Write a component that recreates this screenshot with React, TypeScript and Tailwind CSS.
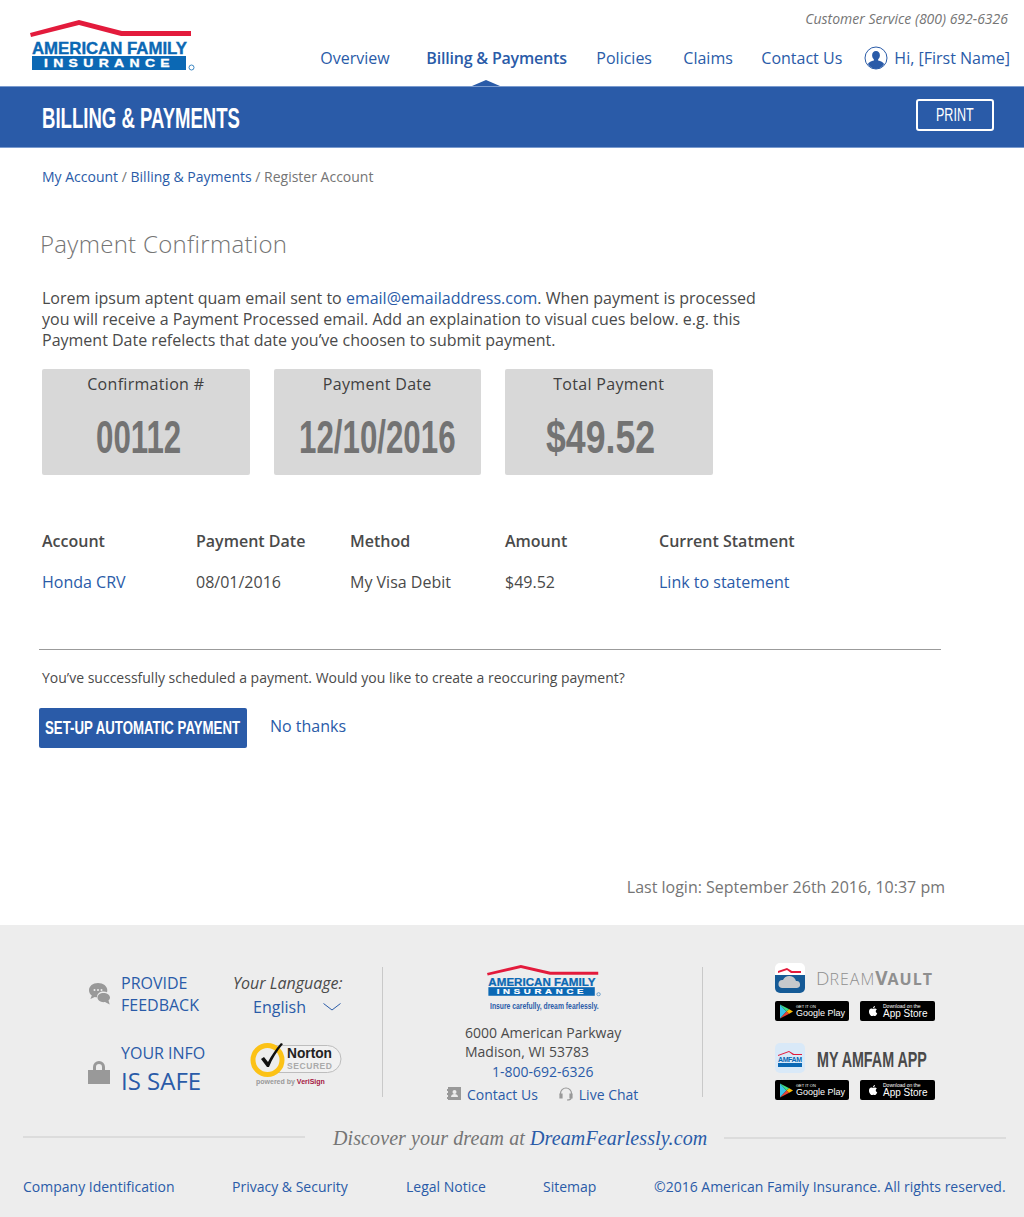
import React from 'react';

const condensed = "font-['Liberation_Sans',sans-serif] inline-block whitespace-nowrap origin-left";

const Logo: React.FC<{ className?: string }> = ({ className }) => (
  <svg viewBox="0 0 165 52" preserveAspectRatio="none" className={className}>
    <path d="M0 13 L49 0 L92 11 H161 V16 H91 L49 5 L1 17 Z" fill="#e31b3c" />
    <text x="2" y="34" fontFamily="'Liberation Sans', sans-serif" fontWeight="700" fontSize="17" fill="#0b68b4" stroke="#0b68b4" strokeWidth="0.4" textLength="155" lengthAdjust="spacingAndGlyphs">AMERICAN FAMILY</text>
    <rect x="2" y="36" width="154" height="14" fill="#0b68b4" />
    <text x="14" y="46.7" fontFamily="'Liberation Sans', sans-serif" fontWeight="700" fontSize="10.5" letterSpacing="4" fill="#fff" stroke="#fff" strokeWidth="0.3" textLength="131" lengthAdjust="spacingAndGlyphs">INSURANCE</text>
    <circle cx="161.500" cy="47.500" r="2.500" fill="none" stroke="#0b68b4" strokeWidth="0.8" />
  </svg>
);

const UserIcon = () => (
  <svg viewBox="0 0 24 24" className="w-[24px] h-[24px]">
    <circle cx="12" cy="12" r="11" fill="#fff" stroke="#2a5ba8" strokeWidth="1" />
    <path d="M12 5c2.400 0 3.900 1.900 3.900 4.300 0 1.700-.8 3.300-1.800 4.100v1.200c2.600.7 5 1.700 6 3.300A11 11 0 0 1 12 23a11 11 0 0 1-8.100-5.100c1-1.600 3.400-2.600 6-3.300v-1.200C8.900 12.600 8.100 11 8.100 9.300 8.100 6.900 9.600 5 12 5z" fill="#2a5ba8" />
  </svg>
);

const ChatIcon = () => (
  <svg viewBox="0 0 24 24" className="w-[24px] h-[24px]" fill="#999">
    <path d="M10 1C4.800 1 1 4.200 1 8.300c0 2.200 1 4 2.800 5.300L2.400 17l4.400-2c.7.2 1.500.3 2.200.3C9 11.500 12 9.500 15.500 9.500c1.300 0 2.500.2 3.500.7C19.200 9.600 19.300 9 19.300 8.300 19.300 4.200 15.200 1 10 1z" />
    <path d="M15.500 11c-3.500 0-6 2-6 4.600s2.500 4.600 6 4.600c.5 0 1 0 1.500-.1l4.700 2.400-1.200-3.900c1-.8 1.500-1.900 1.500-3C22 13 19 11 15.500 11z" />
    <circle cx="6.500" cy="8" r="1" fill="#ededed" />
    <circle cx="10" cy="8" r="1" fill="#ededed" />
    <circle cx="13.500" cy="8" r="1" fill="#ededed" />
  </svg>
);

const LockIcon = () => (
  <svg viewBox="0 0 22 24" className="w-[22px] h-[24px]" fill="#999">
    <path d="M0 10h22v14H0z" />
    <path d="M5 11V7a6 6 0 0 1 12 0v4h-3V7a3 3 0 0 0-6 0v4z" />
  </svg>
);

const NortonSeal = () => (
  <svg viewBox="0 0 92 48" className="w-[92px] h-[48px]">
    <rect x="14" y="6.500" width="77" height="27" rx="13.500" fill="#f1f1f1" stroke="#bdbdbd" strokeWidth="1" />
    <circle cx="17.500" cy="21" r="14.500" fill="#ededed" stroke="#fcc216" strokeWidth="5" />
    <path d="M11 20l3-2 4 5c3-6 7-12 13-19l2 1c-6 7-11 15-14 23h-2z" fill="#111" />
    <text x="37" y="19" fontFamily="'Liberation Sans', sans-serif" fontWeight="700" fontSize="14" fill="#222" textLength="45" lengthAdjust="spacingAndGlyphs">Norton</text>
    <text x="37" y="29.500" fontFamily="'Liberation Sans', sans-serif" fontWeight="700" fontSize="8.500" fill="#aaa" textLength="45">SECURED</text>
    <text x="6" y="45" fontFamily="'Liberation Sans', sans-serif" fontWeight="700" fontSize="7" fill="#999">powered by <tspan fill="#a5173f">VeriSign</tspan></text>
  </svg>
);

const GoogleBadge = () => (
  <div className="w-[74px] h-[20px] bg-black rounded-[2px] flex items-center pl-[5px] gap-[3px]">
    <svg viewBox="0 0 14 15" className="w-[13px] h-[15px] shrink-0">
      <path d="M0 0l7 7.500L0 15z" fill="#3bc4e8" />
      <path d="M0 0l10 5-3 2.500z" fill="#3ddc84" />
      <path d="M0 15l10-5-3-2.500z" fill="#ea4335" />
      <path d="M10 5l4 2.500-4 2.500-3-2.500z" fill="#fbbc04" />
    </svg>
    <div className="flex flex-col text-white leading-none font-['Liberation_Sans',sans-serif]">
      <span className="text-[4px] leading-[5px]">GET IT ON</span>
      <span className="text-[9px] leading-[9px] whitespace-nowrap">Google Play</span>
    </div>
  </div>
);

const AppleBadge = () => (
  <div className="w-[75px] h-[20px] bg-black rounded-[2px] flex items-center pl-[7px] gap-[4px]">
    <svg viewBox="0 0 24 24" className="w-[12px] h-[14px] shrink-0" fill="#fff">
      <path d="M17.500 12.600c0-2.500 2-3.700 2.100-3.800-1.200-1.700-3-1.900-3.600-2-1.500-.2-3 .9-3.800.9s-2-.9-3.300-.9C7.200 6.900 5.600 7.900 4.800 9.400c-1.800 3.100-.5 7.700 1.300 10.200.9 1.200 1.900 2.600 3.200 2.500 1.300-.1 1.800-.8 3.300-.8s2 .8 3.300.8c1.400 0 2.300-1.200 3.100-2.500 1-1.400 1.400-2.800 1.400-2.900-.1 0-2.900-1.100-2.900-4.100zM15 5.100c.7-.9 1.200-2 1-3.200-1 0-2.200.7-2.900 1.500-.6.7-1.200 1.900-1 3 1.100.1 2.200-.5 2.900-1.300z" />
    </svg>
    <div className="flex flex-col text-white leading-none font-['Liberation_Sans',sans-serif]">
      <span className="text-[5px] leading-[6px] whitespace-nowrap">Download on the</span>
      <span className="text-[10px] leading-[10px] whitespace-nowrap">App Store</span>
    </div>
  </div>
);

const StatCard: React.FC<{ label: string; value: string; padClass: string; scaleClass: string }> = ({ label, value, padClass, scaleClass }) => (
  <div className="w-[207.5px] h-[106px] bg-[#d8d8d8] rounded-[2px] pt-[4px]">
    <p className="text-center text-[16px] leading-[22px] font-medium tracking-[0.3px] text-[#404040]">{label}</p>
    <p className={`mt-[17px] h-[50px] ${padClass}`}>
      <span className={`${condensed} text-[46px] leading-[50px] font-bold text-[#737373] ${scaleClass}`}>{value}</span>
    </p>
  </div>
);

const cols = ['w-[154px]', 'w-[154px]', 'w-[155px]', 'w-[154px]', 'w-[200px]'];

export default function App() {
  return (
    <div className="w-[1024px] min-h-[1217px] bg-white font-['Open_Sans',sans-serif] text-[#4a4a4a]">
      <header className="h-[86px] relative pl-[30px] pr-[14px] flex justify-between">
        <Logo className="w-[165px] h-[52px] mt-[20px]" />
        <div className="flex flex-col items-end">
          <p className="mt-[9px] mr-[2px] text-[14px] leading-[20px] italic text-[#757575]">Customer Service (800) 692-6326</p>
          <nav className="mt-[17px] flex items-center text-[16px] leading-[24px] text-[#2a5ba8] h-[24px]">
            <a className="w-[106px]">Overview</a>
            <a className="w-[170px] font-semibold tracking-[-0.2px]">Billing &amp; Payments</a>
            <a className="w-[87px]">Policies</a>
            <a className="w-[78px]">Claims</a>
            <a className="w-[103px]">Contact Us</a>
            <UserIcon />
            <a className="ml-[6px] whitespace-nowrap">Hi, [First Name]</a>
          </nav>
        </div>
        <span className="absolute left-[472px] bottom-0 w-0 h-0 border-x-[14px] border-x-transparent border-b-[6px] border-b-[#2a5ba8]" />
      </header>

      <div className="h-[62px] bg-[#2a5ba8] border-y border-[#7a9bcf] pl-[42px] pr-[30px] flex items-center justify-between">
        <h1 className={`${condensed} mt-[3px] text-[29px] font-bold text-white scale-x-[0.64]`}>BILLING &amp; PAYMENTS</h1>
        <button className="w-[78px] h-[32px] mb-[4px] border-2 border-white rounded-[3px] text-left pl-[18px]">
          <span className={`${condensed} text-white text-[19px] leading-none scale-x-[0.66]`}>PRINT</span>
        </button>
      </div>

      <main className="h-[777px] pl-[42px] relative flex flex-col">
        <p className="mt-[19px] text-[14px] leading-[20px] text-[#757575]">
          <a className="text-[#2a5ba8]">My Account</a> / <a className="text-[#2a5ba8]">Billing &amp; Payments</a> / Register Account
        </p>
        <h2 className="mt-[41px] -ml-[2px] text-[24px] leading-[32px] font-light text-[#757575] tracking-[0.3px]">Payment Confirmation</h2>
        <p className="mt-[28px] w-[730px] text-[16px] leading-[21px] text-[#4a4a4a]">
          Lorem ipsum aptent quam email sent to <a className="text-[#2a5ba8]">email@emailaddress.com</a>. When payment is processed you will receive a Payment Processed email. Add an explaination to visual cues below. e.g. this Payment Date refelects that date you’ve choosen to submit payment.
        </p>
        <div className="mt-[18px] flex gap-[24px]">
          <StatCard label="Confirmation #" value="00112" padClass="pl-[54px]" scaleClass="scale-x-[0.68]" />
          <StatCard label="Payment Date" value="12/10/2016" padClass="pl-[25px]" scaleClass="scale-x-[0.68]" />
          <StatCard label="Total Payment" value="$49.52" padClass="pl-[41px]" scaleClass="scale-x-[0.775]" />
        </div>
        <div className="mt-[54px] flex text-[16px] leading-[24px] font-semibold text-[#4a4a4a]">
          {['Account', 'Payment Date', 'Method', 'Amount', 'Current Statment'].map((h, i) => (
            <div key={h} className={cols[i]}>{h}</div>
          ))}
        </div>
        <div className="mt-[17px] flex text-[16px] leading-[24px]">
          <a className={`${cols[0]} text-[#2a5ba8]`}>Honda CRV</a>
          <div className={cols[1]}>08/01/2016</div>
          <div className={cols[2]}>My Visa Debit</div>
          <div className={cols[3]}>$49.52</div>
          <a className={`${cols[4]} text-[#2a5ba8]`}>Link to statement</a>
        </div>
        <hr className="mt-[55px] -ml-[3px] w-[902px] border-t border-[#9b9b9b]" />
        <p className="mt-[18px] text-[14px] leading-[20px]">You’ve successfully scheduled a payment. Would you like to create a reoccuring payment?</p>
        <div className="mt-[20px] -ml-[3px] flex items-center gap-[23px]">
          <button className="w-[208px] h-[40px] bg-[#2a5ba8] rounded-[2px] text-left pl-[6px]">
            <span className={`${condensed} text-white text-[18px] font-bold scale-x-[0.735]`}>SET-UP AUTOMATIC PAYMENT</span>
          </button>
          <a className="text-[16px] leading-[24px] text-[#2a5ba8] -mt-[4px]">No thanks</a>
        </div>
        <p className="mt-[127px] w-[903px] text-right text-[16px] leading-[24px] text-[#757575]">Last login: September 26th 2016, 10:37 pm</p>
      </main>

      <footer className="h-[292px] bg-[#ededed] pl-[23px] text-[#2a5ba8]">
        <div className="pt-[42px] flex h-[172px]">
          <div className="w-[360px] h-[130px] pl-[65px] border-r border-[#c9c9c9] flex flex-col">
            <div className="flex">
              <div className="mt-[15px] w-[33px]"><ChatIcon /></div>
              <div className="w-[112px] mt-[5px] text-[16px] leading-[22px]">PROVIDE<br />FEEDBACK</div>
              <div className="mt-[5px] w-[108px] text-right">
                <p className="text-[16px] leading-[22px] italic text-[#4a4a4a] whitespace-nowrap">Your Language:</p>
                <div className="mt-[1px] flex items-center justify-end gap-[17px] text-[16px] leading-[24px]">
                  English
                  <svg viewBox="0 0 18 8" className="w-[18px] h-[8px] fill-none stroke-[#2a5ba8]"><path d="M0.500 0.500L9 7l8.500-6.500" /></svg>
                </div>
              </div>
            </div>
            <div className="mt-[22px] flex">
              <div className="mt-[19px] w-[33px]"><LockIcon /></div>
              <div className="w-[129px]">
                <p className="text-[16px] leading-[24px]">YOUR INFO</p>
                <p className="text-[24px] leading-[31px]">IS SAFE</p>
              </div>
              <div className="-mt-[2px]"><NortonSeal /></div>
            </div>
          </div>
          <div className="w-[320px] h-[130px] border-r border-[#c9c9c9] pl-[82px] flex flex-col">
            <div className="pl-[22px] -mt-[2px]">
              <Logo className="w-[114px] h-[32px]" />
              <p className="mt-[2px] pl-[3px] h-[8px] leading-[8px]">
                <span className={`${condensed} text-[8.5px] leading-[8px] font-bold text-[#2a5ba8] scale-x-[0.8]`}>Insure carefully, dream fearlessly.</span>
              </p>
            </div>
            <p className="mt-[16px] text-[14px] leading-[19px] text-[#4a4a4a]">6000 American Parkway<br />Madison, WI 53783</p>
            <a className="pl-[27px] text-[14px] leading-[21px]">1-800-692-6326</a>
            <div className="mt-[3px] -ml-[18px] flex items-center text-[14px] leading-[20px]">
              <svg viewBox="0 0 14 13" className="w-[14px] h-[13px] -mt-[3px]"><path d="M1 0h13v13H1z" fill="#999" /><path d="M0 2h2v2H0zM0 6h2v2H0zM0 10h2v2H0z" fill="#999" /><circle cx="7.500" cy="5" r="2" fill="#ededed" /><path d="M4 10c0-2 1.500-3 3.500-3s3.500 1 3.500 3z" fill="#ededed" /></svg>
              <a className="ml-[6px]">Contact Us</a>
              <svg viewBox="0 0 14 14" className="ml-[21px] w-[14px] h-[14px] fill-none stroke-[#999] -mt-[3px]" strokeWidth="1.200"><path d="M1.500 8V6.500a5.500 5.500 0 0 1 11 0V8" /><path d="M1 7h2v4H1zM11 7h2v4h-2z" fill="#999" /><path d="M12 11c0 1.500-2 2-4 2" /></svg>
              <a className="ml-[6px]">Live Chat</a>
            </div>
          </div>
          <div className="pl-[72px] flex flex-col -mt-[4px]">
            <div className="flex items-center h-[30px]">
              <svg viewBox="0 0 30 30" className="w-[30px] h-[30px]">
                <rect width="30" height="30" rx="5" fill="#fff" />
                <path d="M0 12h30v13a5 5 0 0 1-5 5H5a5 5 0 0 1-5-5z" fill="#155a96" />
                <path d="M3 8l9-3 5 3h9v2h-10l-4-3-9 3z" fill="#e31b3c" />
                <path d="M7 25a4 4 0 0 1 1-8 7 7 0 0 1 13 1 3.500 3.500 0 0 1 1 7z" fill="#c5c8cc" />
              </svg>
              <span className="ml-[11px] text-[#8f8f8f] text-[19px] leading-none whitespace-nowrap">
                <span className="font-light">D</span><span className="font-light text-[16px] tracking-[1px]">REAM</span><span className="font-bold">V</span><span className="font-bold text-[16px] tracking-[1px]">AULT</span>
              </span>
            </div>
            <div className="mt-[8px] flex gap-[11px]"><GoogleBadge /><AppleBadge /></div>
            <div className="mt-[22px] flex items-center h-[30px]">
              <svg viewBox="0 0 30 30" className="w-[30px] h-[30px]">
                <rect width="30" height="30" rx="5" fill="#d9e9f8" />
                <path d="M3 12l11-4 5 3h8v1H18l-4-3-11 4z" fill="#e31b3c" />
                <text x="3" y="19" fontFamily="'Liberation Sans', sans-serif" fontWeight="700" fontSize="7" fill="#0b68b4" textLength="24">AMFAM</text>
                <rect x="3" y="20" width="24" height="4" fill="#0b68b4" />
              </svg>
              <span className={`${condensed} mt-[3px] ml-[12px] text-[22px] font-bold text-[#4a4a4a] scale-x-[0.65]`}>MY AMFAM APP</span>
            </div>
            <div className="mt-[7px] flex gap-[11px]"><GoogleBadge /><AppleBadge /></div>
          </div>
        </div>
        <div className="mt-[29px] flex items-center h-[24px]">
          <span className="w-[282px] shrink-0 h-[2px] bg-[#dcdcdc] -mt-[3px]" />
          <p className="ml-[28px] w-[391px] shrink-0 text-[20px] leading-[24px] italic tracking-[0.1px] font-['Liberation_Serif',serif] text-[#757575] whitespace-nowrap">Discover your dream at <a className="text-[#2a5ba8]">DreamFearlessly.com</a></p>
          <span className="w-[282px] shrink-0 h-[2px] bg-[#dcdcdc]" />
        </div>
        <div className="mt-[27px] flex text-[14px] leading-[20px] whitespace-nowrap">
          <a className="w-[209px] shrink-0">Company Identification</a>
          <a className="w-[174px] shrink-0">Privacy &amp; Security</a>
          <a className="w-[137px] shrink-0">Legal Notice</a>
          <a className="w-[111px] shrink-0">Sitemap</a>
          <span className="shrink-0">©2016 American Family Insurance. All rights reserved.</span>
        </div>
      </footer>
    </div>
  );
}
